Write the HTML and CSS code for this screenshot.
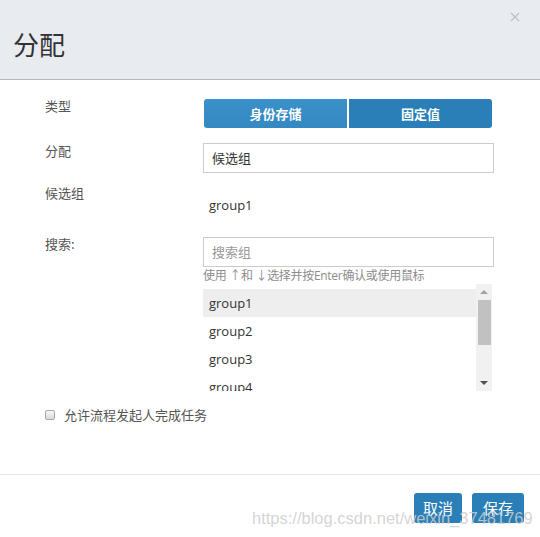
FILE: index.html
```html
<!DOCTYPE html>
<html lang="zh-CN">
<head>
<meta charset="utf-8">
<title>分配</title>
<link rel="stylesheet" href="styles.css">
</head>
<body>
<div class="modal">
  <div class="modal-header">
    <h1 class="modal-title">分配</h1>
    <button class="close" aria-label="关闭">
      <svg width="10" height="10" viewBox="0 0 10 10"><path d="M1 1L9 9M9 1L1 9" stroke="#bfc3c7" stroke-width="1.4" fill="none"/></svg>
    </button>
  </div>
  <div class="modal-body">
    <div class="row row-type">
      <div class="label">类型</div>
      <div class="control btn-group">
        <button class="seg seg-active">身份存储</button>
        <button class="seg">固定值</button>
      </div>
    </div>
    <div class="row row-assign">
      <div class="label">分配</div>
      <div class="control">
        <div class="input">候选组</div>
      </div>
    </div>
    <div class="row row-cand">
      <div class="label">候选组</div>
      <div class="control value">group1</div>
    </div>
    <div class="row row-search">
      <div class="label">搜索:</div>
      <div class="control">
        <div class="input placeholder">搜索组</div>
        <div class="hint">使用 ↑和 ↓选择并按Enter确认或使用鼠标</div>
        <div class="listbox">
          <ul class="list">
            <li class="item selected">group1</li>
            <li class="item">group2</li>
            <li class="item">group3</li>
            <li class="item">group4</li>
          </ul>
          <div class="scrollbar">
            <span class="arrow up"></span>
            <span class="thumb"></span>
            <span class="track"></span>
            <span class="arrow down"></span>
          </div>
        </div>
      </div>
    </div>
    <label class="check-row">
      <input type="checkbox" class="check">
      <span>允许流程发起人完成任务</span>
    </label>
  </div>
  <div class="modal-footer">
    <button class="btn btn-cancel">取消</button>
    <button class="btn btn-save">保存</button>
  </div>
</div>
<div class="watermark">https://blog.csdn.net/weixin_37481769</div>
</body>
</html>
```
FILE: styles.css
```css
html, body {
  margin: 0;
  padding: 0;
  background: #fff;
}
body {
  width: 540px;
  height: 537px;
  overflow: hidden;
  position: relative;
  font-family: "Open Sans", "Noto Sans CJK SC", sans-serif;
  color: #333;
}
.modal-header {
  height: 79px;
  background: #e8ecf0;
  border-bottom: 1px solid #b4b9be;
  position: relative;
  box-sizing: content-box;
}
.modal-title {
  margin: 0;
  padding: 27px 0 0 13px;
  font-family: "Noto Sans CJK SC", sans-serif;
  font-weight: normal;
  font-size: 26px;
  line-height: 34px;
  color: #333;
}
.close {
  position: absolute;
  top: 12px;
  right: 20px;
  width: 10px;
  height: 10px;
  padding: 0;
  border: 0;
  background: none;
  display: flex;
}
.modal-body {
  padding: 19px 0 0 45px;
  height: 394px;
  box-sizing: border-box;
}
.row {
  display: flex;
}
.label {
  width: 158px;
  flex: none;
  font-family: "Noto Sans CJK SC", sans-serif;
  font-size: 13px;
  line-height: 18px;
  color: #555;
  position: relative;
  top: -2px;
}
.control {
  width: 291px;
}
.btn-group {
  display: flex;
  gap: 2px;
  width: 288px;
  margin-left: 1px;
}
.seg {
  flex: 1;
  height: 29px;
  border: 0;
  padding: 0;
  color: #fff;
  font-family: "Noto Sans CJK SC", sans-serif;
  font-weight: bold;
  font-size: 13px;
  background: #2a7fb8;
}
.seg:first-child { border-radius: 3px 0 0 3px; }
.seg:last-child { border-radius: 0 3px 3px 0; }
.seg-active {
  background: linear-gradient(#3b91ca, #3588c2);
}
.row-assign { margin-top: 15px; }
.row-assign .label { margin-top: 1px; }
.input {
  height: 30px;
  box-sizing: border-box;
  border: 1px solid #ccc;
  padding: 0 8px;
  font-family: "Noto Sans CJK SC", sans-serif;
  font-size: 13px;
  line-height: 28px;
  color: #333;
}
.placeholder {
  color: #999;
}
.row-cand { margin-top: 13px; }
.value {
  padding: 10px 0 0 6px;
  font-size: 13px;
  line-height: 18px;
  color: #333;
}
.row-search { margin-top: 23px; }
.hint {
  margin-top: 1px;
  font-family: "Open Sans", "Noto Sans CJK SC", sans-serif;
  font-size: 12px;
  line-height: 16px;
  color: #8c8c8c;
  white-space: nowrap;
  letter-spacing: -0.3px;
}
.listbox {
  display: flex;
  height: 107px;
  width: 289px;
  overflow: hidden;
}
.list {
  flex: 1;
  list-style: none;
  margin: 0;
  padding: 5px 0 0 0;
}
.item {
  height: 28px;
  line-height: 28px;
  padding-left: 6px;
  font-size: 13px;
  color: #333;
}
.item.selected {
  background: #eeeeee;
}
.scrollbar {
  width: 16px;
  flex: none;
  background: #f1f1f1;
  display: flex;
  flex-direction: column;
  align-items: center;
}
.arrow {
  width: 0;
  height: 0;
  border-left: 4px solid transparent;
  border-right: 4px solid transparent;
}
.arrow.up {
  margin-top: 6px;
  border-bottom: 4px solid #a3a3a3;
}
.arrow.down {
  margin-bottom: 6px;
  border-top: 4px solid #505050;
}
.thumb {
  margin-top: 6px;
  width: 13px;
  height: 45px;
  background: #c1c1c1;
  margin-left: 1px;
}
.track {
  flex: 1;
}
.check-row {
  display: flex;
  align-items: center;
  margin-top: 15px;
  font-family: "Noto Sans CJK SC", sans-serif;
  font-size: 13px;
  line-height: 18px;
  color: #555;
}
.check {
  appearance: none;
  -webkit-appearance: none;
  margin: 0 9px 0 0;
  width: 10px;
  height: 10px;
  border: 1px solid #a9a9a9;
  border-radius: 2px;
  background: linear-gradient(#f6f6f6, #dadada);
}
.modal-footer {
  border-top: 1px solid #e5e5e5;
  display: flex;
  justify-content: flex-end;
  gap: 10px;
  padding: 18px 16px 0 0;
}
.btn {
  height: 30px;
  padding: 0 9px;
  border: 0;
  border-radius: 3px;
  background: #2a7fb8;
  color: #fff;
  font-family: "Noto Sans CJK SC", sans-serif;
  font-size: 15px;
  line-height: 30px;
}
.btn-save {
  padding: 0 11px;
}
.watermark {
  position: absolute;
  left: 252px;
  top: 507px;
  font-family: "Liberation Sans", sans-serif;
  font-size: 16.5px;
  line-height: 22px;
  color: rgba(205, 205, 205, 0.85);
  white-space: nowrap;
  pointer-events: none;
}
```
